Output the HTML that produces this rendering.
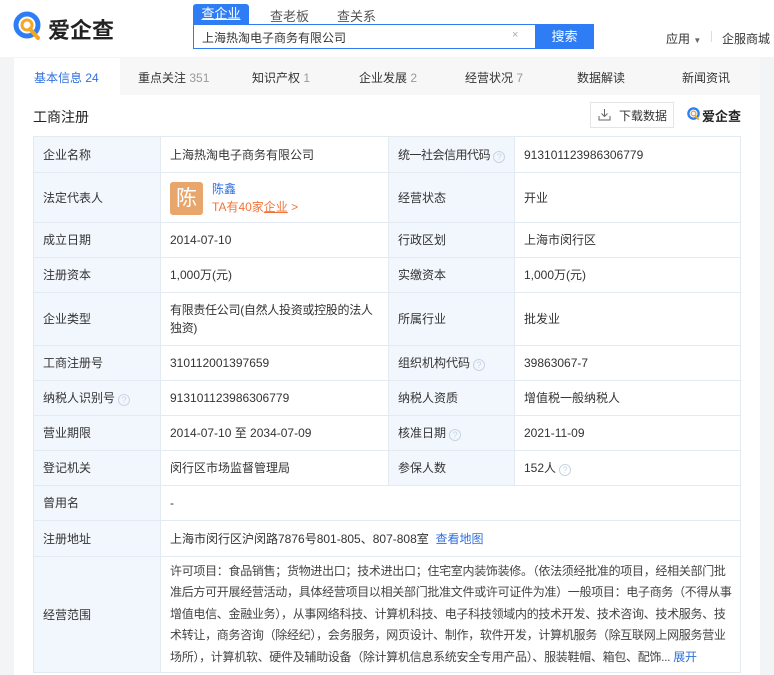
<!DOCTYPE html>
<html><head><meta charset="utf-8"><style>
*{margin:0;padding:0;box-sizing:border-box}
body{width:774px;height:675px;overflow:hidden;background:#f3f4f6;font-family:"Liberation Sans","Noto Sans CJK SC",sans-serif;font-size:12px;color:#333;position:relative}
.hdr{position:absolute;left:0;top:0;width:774px;height:57px;background:#fff}
.abs{position:absolute}
.tabs{position:absolute;left:14px;top:58px;width:746px;height:37px;background:#f7f7f7}
.tabs span{position:absolute;top:11px;font-size:12px;color:#333}
.tabs span i{font-style:normal;color:#999}
.panel{position:absolute;left:14px;top:95px;width:746px;height:580px;background:#fff}
table{position:absolute;left:33px;top:136px;border-collapse:collapse;width:707px;table-layout:fixed}
td{border:1px solid #e4eaf2;padding:0 9px;vertical-align:middle;line-height:18px;overflow:hidden;white-space:nowrap}
td.w{white-space:normal}
td.l,td.l2{background:#f2f7fd}
.q{display:inline-block;width:12px;height:12px;border:1px solid #c8d4e4;border-radius:50%;font-size:9px;line-height:10px;text-align:center;color:#c8d4e4;vertical-align:-1px;margin-left:3px}
.b{color:#2f6fde}
</style></head><body>
<div class="hdr">
 <svg class="abs" style="left:13px;top:11px" width="30" height="30" viewBox="0 0 30 30"><circle cx="14" cy="14" r="11" fill="none" stroke="#2e7df5" stroke-width="5"/><circle cx="14" cy="14" r="5" fill="none" stroke="#f5a623" stroke-width="3"/><path d="M17 18 L25 27" stroke="#f5a623" stroke-width="4" stroke-linecap="round"/></svg>
 <div class="abs" style="left:48px;top:13px;font-size:22px;font-weight:bold;color:#222">爱企查</div>
 <div class="abs" style="left:193px;top:4px;width:56px;height:20px;background:#2e7df5;border-radius:3px 3px 0 0;color:#fff;font-size:13px;text-align:center;line-height:20px;text-decoration:underline">查企业</div>
 <div class="abs" style="left:270px;top:6px;font-size:13px;color:#555">查老板</div>
 <div class="abs" style="left:337px;top:6px;font-size:13px;color:#555">查关系</div>
 <div class="abs" style="left:193px;top:24px;width:401px;height:25px;border:1px solid #2e7df5;background:#fff"></div>
 <div class="abs" style="left:202px;top:29px;font-size:12px;color:#333">上海热淘电子商务有限公司</div>
 <div class="abs" style="left:512px;top:29px;font-size:11px;color:#aaa">×</div>
 <div class="abs" style="left:535px;top:24px;width:59px;height:25px;background:#2e7df5;color:#fff;font-size:13px;text-align:center;line-height:25px">搜索</div>
 <div class="abs" style="left:666px;top:30px;font-size:12px;color:#333">应用 <span style="font-size:8px;color:#666">▼</span></div>
 <div class="abs" style="left:711px;top:31px;width:1px;height:11px;background:#ddd"></div>
 <div class="abs" style="left:722px;top:30px;font-size:12px;color:#333">企服商城</div>
</div>
<div class="tabs">
 <div class="abs" style="left:0;top:0;width:106px;height:37px;background:#fff"></div>
 <span style="left:20px;color:#2f6fde">基本信息 24</span>
 <span style="left:124px">重点关注 <i>351</i></span>
 <span style="left:238px">知识产权 <i>1</i></span>
 <span style="left:345px">企业发展 <i>2</i></span>
 <span style="left:451px">经营状况 <i>7</i></span>
 <span style="left:563px">数据解读</span>
 <span style="left:668px">新闻资讯</span>
</div>
<div class="panel"></div>
<div class="abs" style="left:33px;top:107px;font-size:14px;color:#222">工商注册</div>
<div class="abs" style="left:590px;top:102px;width:84px;height:26px;border:1px solid #e5e5e5;background:#fff"></div>
<svg class="abs" style="left:598px;top:108px" width="13" height="13" viewBox="0 0 13 13"><path d="M6.5 1v7M3.5 5.5l3 3 3-3M1 8v4h11V8" fill="none" stroke="#666" stroke-width="1"/></svg>
<div class="abs" style="left:619px;top:107px;font-size:12px;color:#333">下载数据</div>
<svg class="abs" style="left:687px;top:107px" width="14" height="14" viewBox="0 0 30 30"><circle cx="14" cy="14" r="11" fill="none" stroke="#2e7df5" stroke-width="5"/><circle cx="14" cy="14" r="5" fill="none" stroke="#f5a623" stroke-width="3"/><path d="M17 18 L25 27" stroke="#f5a623" stroke-width="4"/></svg>
<div class="abs" style="left:702px;top:106px;font-size:13px;font-weight:bold;color:#222">爱企查</div>
<table>
<colgroup><col style="width:127px"><col style="width:228px"><col style="width:126px"><col style="width:226px"></colgroup>
<tr style="height:36px"><td class="l">企业名称</td><td class="v">上海热淘电子商务有限公司</td><td class="l2" style="letter-spacing:-0.5px;padding-right:0">统一社会信用代码<span class="q">?</span></td><td>913101123986306779</td></tr>
<tr style="height:50px"><td class="l">法定代表人</td><td class="v"><div style="position:relative;height:34px"><div style="position:absolute;left:0;top:1px;width:33px;height:33px;background:#e8a56c;border-radius:3px;color:#fff;font-size:21px;text-align:center;line-height:33px">陈</div><div style="position:absolute;left:42px;top:-1px" class="b">陈鑫</div><div style="position:absolute;left:42px;top:17px;color:#f0743a">TA有40家<u>企业</u> &gt;</div></div></td><td class="l2">经营状态</td><td>开业</td></tr>
<tr style="height:35px"><td class="l">成立日期</td><td class="v">2014-07-10</td><td class="l2">行政区划</td><td>上海市闵行区</td></tr>
<tr style="height:35px"><td class="l">注册资本</td><td class="v">1,000万(元)</td><td class="l2">实缴资本</td><td>1,000万(元)</td></tr>
<tr style="height:53px"><td class="l">企业类型</td><td class="v w" style="letter-spacing:-0.3px">有限责任公司(自然人投资或控股的法人独资)</td><td class="l2">所属行业</td><td>批发业</td></tr>
<tr style="height:35px"><td class="l">工商注册号</td><td class="v">310112001397659</td><td class="l2">组织机构代码<span class="q">?</span></td><td>39863067-7</td></tr>
<tr style="height:35px"><td class="l">纳税人识别号<span class="q">?</span></td><td class="v">913101123986306779</td><td class="l2">纳税人资质</td><td>增值税一般纳税人</td></tr>
<tr style="height:35px"><td class="l">营业期限</td><td class="v">2014-07-10 至 2034-07-09</td><td class="l2">核准日期<span class="q">?</span></td><td>2021-11-09</td></tr>
<tr style="height:35px"><td class="l">登记机关</td><td class="v">闵行区市场监督管理局</td><td class="l2">参保人数</td><td>152人<span class="q">?</span></td></tr>
<tr style="height:35px"><td class="l">曾用名</td><td colspan="3">-</td></tr>
<tr style="height:36px"><td class="l">注册地址</td><td colspan="3">上海市闵行区沪闵路7876号801-805、807-808室 &nbsp;<span class="b">查看地图</span></td></tr>
<tr style="height:116px"><td class="l">经营范围</td><td colspan="3" class="w" style="line-height:21.5px;color:#444;padding-right:8px;letter-spacing:-0.3px">许可项目：食品销售；货物进出口；技术进出口；住宅室内装饰装修。（依法须经批准的项目，经相关部门批准后方可开展经营活动，具体经营项目以相关部门批准文件或许可证件为准）一般项目：电子商务（不得从事增值电信、金融业务），从事网络科技、计算机科技、电子科技领域内的技术开发、技术咨询、技术服务、技术转让，商务咨询（除经纪），会务服务，网页设计、制作，软件开发，计算机服务（除互联网上网服务营业场所），计算机软、硬件及辅助设备（除计算机信息系统安全专用产品）、服装鞋帽、箱包、配饰... <span class="b">展开</span></td></tr>
</table>
</body></html>
